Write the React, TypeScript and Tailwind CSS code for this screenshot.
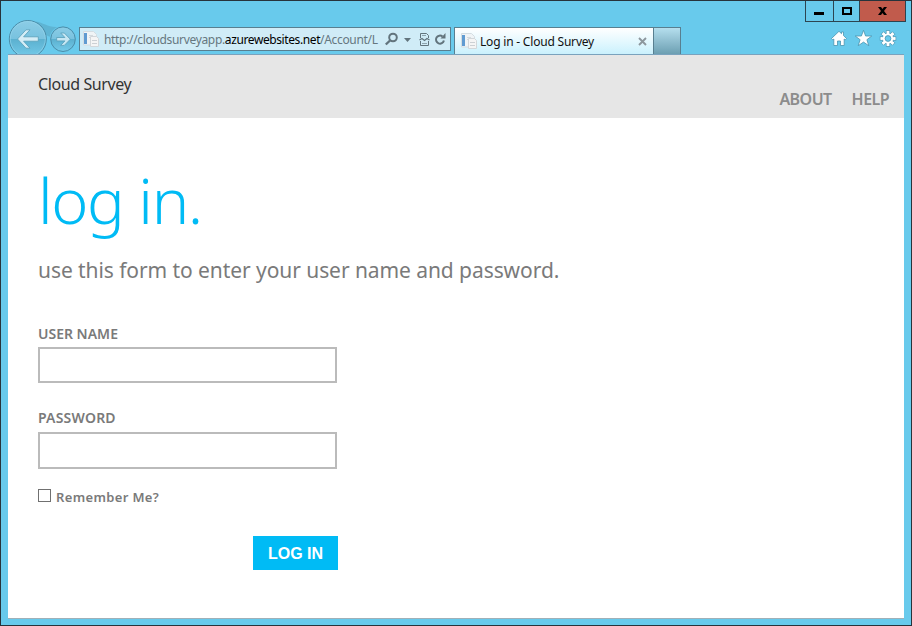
import React from "react";

function NavButtons() {
  return (
    <svg width="71" height="34" viewBox="8 20 71 34" className="shrink-0">
      <defs>
        <linearGradient id="nav" x1="0" y1="0" x2="0" y2="1">
          <stop offset="0" stopColor="#8ccde6" />
          <stop offset="0.49" stopColor="#78c2df" />
          <stop offset="0.5" stopColor="#5bb0cf" />
          <stop offset="1" stopColor="#74cbea" />
        </linearGradient>
      </defs>
      <path d="M36 21.500c7 1 12 6 21 5.500l1 2-8 8-4-2z" fill="#5eb4d3" />
      <circle cx="27.800" cy="39" r="18.500" fill="url(#nav)" stroke="#4a8ca8" />
      <circle cx="27.800" cy="39" r="17.500" fill="none" stroke="#97d9ef" strokeOpacity="0.6" />
      <circle cx="63" cy="39.200" r="13.500" fill="#68caec" />
      <circle cx="63" cy="39.200" r="12.300" fill="url(#nav)" stroke="#4a8ca8" />
      <path d="M17.500 39 26 29.800h4l-6.400 7H38.300v4.400H23.600l6.400 7H26z" fill="#d5edf6" stroke="#579eb9" strokeWidth="0.8" />
      <path d="M70.300 39.200 64.300 33h-3.600l4.200 4.500h-8.200v3.400h8.200l-4.200 4.500h3.600z" fill="#c6e7f3" stroke="#579eb9" strokeWidth="0.8" />
    </svg>
  );
}

function PageIcon() {
  return (
    <svg width="16" height="16" viewBox="0 0 16 16" className="shrink-0">
      <path d="M.5.500h10l3 3V14H.5z" fill="#f0f4f6" stroke="#d4dde2" />
      <path d="M1 2h3v11H1z" fill="#609bd1" />
      <path d="M6 4.500h4M6 6.500h3" stroke="#d5dadd" />
      <path d="M7.500 5.500h6l2 2v8h-8z" fill="#f5f5f5" stroke="#d3d7da" />
      <path d="M9 9.500h5M9 12.500h5" stroke="#ccd0d4" />
    </svg>
  );
}

function AddressBar() {
  return (
    <div className="flex h-[24px] w-[372px] shrink-0 items-center border border-[#587f90] bg-[#d0ecf7] pl-[3px]">
      <PageIcon />
      <div className="ml-[5px] mt-[2px] w-[280px] whitespace-nowrap text-[12px] leading-[20px] tracking-[-0.33px] text-[#66777f]">
        http://cloudsurveyapp.<span className="tracking-[-0.4px] text-black">azurewebsites.net</span>/Account/L
      </div>
      <svg width="66" height="22" viewBox="384 28 66 22" className="shrink-0" fill="none" stroke="#62747d">
        <circle cx="393" cy="37.500" r="3.800" strokeWidth="2" />
        <path d="M390 40.500 385.800 44.500" strokeWidth="2.400" />
        <path d="M404 38h7l-3.500 4z" fill="#62747d" stroke="none" />
        <path d="M420.500 38v-4.500h6l2 2V38M420.500 41v4.500h8V41" />
        <path d="M422 35.500h4M422 43.500h5" strokeOpacity="0.6" />
        <path d="m419.500 40 2.500-1.500 2.500 2 2.500-2 2.500 1.500" strokeWidth="1.300" />
        <path d="M442.500 36.500a4 4 0 1 0 1.400 4" strokeWidth="2" />
        <path d="M440.500 38.500h5v-5.500z" fill="#62747d" stroke="none" />
      </svg>
    </div>
  );
}

function Tab() {
  return (
    <div className="ml-[3px] flex h-[27px] w-[227px] shrink-0 border border-b-0 border-[#587f90]">
      <div className="flex w-[198px] items-center bg-linear-to-b from-white to-[#caf1fd] pl-[6px]">
        <PageIcon />
        <span className="ml-[3px] mt-[2px] w-[158px] whitespace-nowrap text-[12px] leading-[20px] text-[#111] tracking-[-0.2px]">
          Log in - Cloud Survey
        </span>
        <svg width="9" height="9" viewBox="0 0 9 9" className="shrink-0">
          <path d="m1 1 7 7M8 1 1 8" stroke="#8d979d" strokeWidth="1.900" />
        </svg>
      </div>
      <div className="flex-1 border-l border-[#587f90] bg-linear-to-b from-[#b5dfee] to-[#6c9fb2]" />
    </div>
  );
}

function WindowControls() {
  return (
    <div className="flex h-[21px] w-[101px] border border-t-0 border-[#2c4450]">
      <div className="flex w-[28px] justify-center border-r border-[#2c4450] pr-[2px] pt-[11px]">
        <div className="h-[3px] w-[10px] bg-black" />
      </div>
      <div className="flex w-[26px] justify-center border-r border-[#2c4450] pt-[6px]">
        <div className="h-[8px] w-[10px] border-2 border-black" />
      </div>
      <div className="flex flex-1 justify-center bg-[#c15b4c] pt-[6px]">
        <svg width="9" height="8" viewBox="0 0 9 8">
          <path d="M0 0h3l1.500 2L6 0h3L6 4l3 4H6L4.500 6 3 8H0l3-4z" fill="#000" />
        </svg>
      </div>
    </div>
  );
}

function ToolIcons() {
  const teeth = [0, 45, 90, 135, 180, 225, 270, 315];
  return (
    <svg width="66" height="18" viewBox="831 30 66 18" className="mr-[9px] mt-[8px]">
      <g fill="#fff" stroke="#4a94b0" strokeWidth="0.8">
        <path d="M831.500 38.500 839 31.300l2.500 2.400V32h2v3.600l3 2.900-1.300 1.300-1-.8v6.500h-3.700v-4.500h-3v4.500h-3.700V39l-1 .8z" />
        <path d="m863.500 30.300 2.100 5.700h6.200l-4.900 3.700 1.900 6-5.300-3.600-5.300 3.600 1.900-6-4.900-3.700h6.200z" />
        <g>
          {teeth.map((a) => (
            <rect key={a} x="886.300" y="30.700" width="3.400" height="4" transform={`rotate(${a} 888 38.500)`} />
          ))}
        </g>
        <circle cx="888" cy="38.500" r="5.600" />
        {teeth.map((a) => (
          <rect key={a} x="886.700" y="31.100" width="2.600" height="4" stroke="none" transform={`rotate(${a} 888 38.500)`} />
        ))}
        <circle cx="888" cy="38.500" r="2.900" fill="#68caec" />
      </g>
    </svg>
  );
}

function Field({ label, labelClass, className }: { label: string; labelClass: string; className: string }) {
  return (
    <label className="block">
      <span className={`block h-[20px] text-[14px] font-semibold leading-[20px] text-[#7a7a7a] ${labelClass}`}>{label}</span>
      <input className={`block w-[299px] border-2 border-[#bbb] bg-white outline-none ${className}`} />
    </label>
  );
}

export default function App() {
  return (
    <div className="flex h-[626px] w-[912px] flex-col border border-[#27333b] bg-[#68caec] px-[7px] font-['Noto_Sans','Open_Sans',sans-serif]">
      <div className="flex h-[53px] justify-between">
        <div className="flex pt-[19px]">
          <NavButtons />
          <div className="flex pt-[7px]">
            <AddressBar />
            <Tab />
          </div>
        </div>
        <div className="-mr-[2px] flex flex-col items-end">
          <WindowControls />
          <ToolIcons />
        </div>
      </div>
      <div className="h-px bg-[#7aa2bd]" />
      <div className="flex h-[564px] w-[896px] flex-col border-b border-[#9fb0b8] bg-white">
        <header className="flex h-[63px] justify-between bg-[#e6e6e6] pl-[30px] pr-[15px]">
          <div className="pt-[17px] text-[16px] leading-[24px] text-[#333] tracking-[-0.4px]">Cloud Survey</div>
          <nav className="flex gap-[20px] pt-[32px] text-[16px] font-semibold leading-[24px] tracking-[-0.55px] text-[#8c8c8c]">
            <span>ABOUT</span>
            <span>HELP</span>
          </nav>
        </header>
        <main className="pl-[30px]">
          <h1 className="mt-[38px] h-[88px] whitespace-nowrap font-['Noto_Sans'] text-[63px] font-light leading-[88px] tracking-[-1.4px] text-[#00bbf5]">log in.</h1>
          <h2 className="mt-[11px] text-[21px] leading-[30px] tracking-[-0.07px] text-[#7a7a7a]">
            use this form to enter your user name and password.
          </h2>
          <form className="mt-[39px] w-[300px]">
            <Field label="USER NAME" labelClass="tracking-normal" className="mt-[3px] h-[36px]" />
            <div className="h-[25px]" />
            <Field label="PASSWORD" labelClass="tracking-[0.2px]" className="mt-[4px] h-[37px]" />
            <label className="mt-[18px] flex h-[20px] text-[13px] font-semibold leading-[20px] tracking-[0.35px] text-[#7a7a7a]">
              <span className="mr-[5px] mt-[2px] h-[13px] w-[13px] border border-[#707070] bg-white" />
              Remember Me?
            </label>
            <button type="button" className="ml-auto mt-[29px] block h-[34px] w-[85px] bg-[#00bbf5] pt-px font-['Liberation_Sans',sans-serif] text-[16px] font-bold leading-[34px] text-white">
              LOG IN
            </button>
          </form>
        </main>
      </div>
    </div>
  );
}
